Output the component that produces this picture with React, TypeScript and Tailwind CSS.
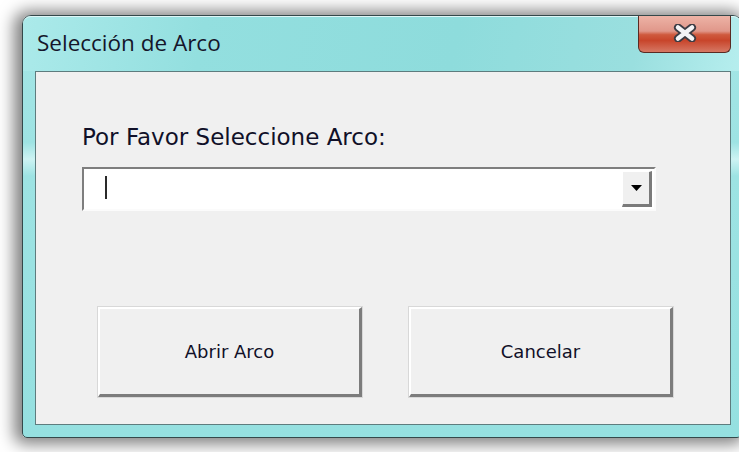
import React from 'react';

const CloseGlyph = () => (
  <svg width="24" height="18" viewBox="0 0 24 18">
    <g strokeLinecap="round">
      <path d="M5 3.5 L19 14.5 M19 3.5 L5 14.5" stroke="#3c3c44" strokeWidth="8" />
      <path d="M5 3.5 L19 14.5 M19 3.5 L5 14.5" stroke="#f4f4f6" strokeWidth="4.5" />
    </g>
  </svg>
);

const ArrowDown = () => (
  <svg width="11" height="6" viewBox="0 0 11 6">
    <path d="M0 0 H11 L5.5 6 Z" fill="#000" />
  </svg>
);

const DialogButton = ({ label }: { label: string }) => (
  <button className="w-[264px] h-[90px] bg-[#f0f0f0] border-t-2 border-l-2 border-t-white border-l-white border-b-[3px] border-r-[3px] border-b-[#7c7c7c] border-r-[#7c7c7c] outline outline-1 outline-[#d8d8d8] text-[18px] text-[#101028] font-['DejaVu_Sans',sans-serif]">
    {label}
  </button>
);

export default function App() {
  return (
    <div className="w-[739px] h-[452px] bg-white overflow-hidden pt-[15px] pl-[22px]">
      {/* window frame */}
      <div className="relative w-[720px] h-[423px] flex flex-col border border-[#34484a] rounded-t-[9px] rounded-b-[5px] bg-[linear-gradient(180deg,#a4e6e6_0%,#9ee3e3_30%,#cdf3f3_34%,#9de3e3_38%,#95e0e0_100%)] shadow-[-3px_1px_16px_5px_rgba(0,0,0,0.5)]">
        {/* title bar */}
        <div className="h-[55px] flex items-center pl-[14px] rounded-t-[8px] border-t border-t-[#dff7f7] bg-[linear-gradient(100deg,#abeaea_0%,#93dfdf_25%,#8edcdc_60%,#9adfdf_85%,#b6eeee_100%)]">
          <span className="text-[22.5px] text-[#15152a] font-['Open_Sans',sans-serif] leading-none -mt-[1px]">
            Selección de Arco
          </span>
        </div>

        <div className="absolute top-0 right-[10px] w-[93px] h-[37px] flex items-center justify-center rounded-b-[6px] border border-t-0 border-[#5a2a22] bg-[linear-gradient(180deg,#edb3a6_0%,#e0978a_42%,#cf5a3e_52%,#c8452b_68%,#d67864_100%)]">
          <div className="-mt-[2px]">
            <CloseGlyph />
          </div>
        </div>

        {/* client area */}
        <div className="flex-1 flex flex-col ml-[12px] mr-[10px] mb-[12px] w-[696px] border border-[#5e7c7e] bg-[#f0f0f0] pl-[46px] font-['DejaVu_Sans',sans-serif]">
          <div className="mt-[51px] h-[28px] flex items-center text-[23px] text-[#101028] leading-none">
            Por Favor Seleccione Arco:
          </div>

          <div className="mt-[16px] w-[574px] h-[44px] border-t-2 border-l-2 border-t-[#7e7e7e] border-l-[#7e7e7e] border-b-2 border-r-2 border-b-[#fbfbfb] border-r-[#fbfbfb] bg-white flex items-center p-[2px]">
            <div className="flex-1 h-full flex items-center pl-[19px]">
              <div className="w-[2px] h-[23px] bg-[#2a2a2a] -mt-[4px]" />
            </div>
            <div className="w-[30px] h-[36px] flex items-center justify-center bg-[#f0f0f0] border-t border-l border-t-white border-l-white border-b-[3px] border-r-[3px] border-b-[#7a7a7a] border-r-[#7a7a7a]">
              <ArrowDown />
            </div>
          </div>

          <div className="mt-[96px] ml-[16px] flex gap-[47px]">
            <DialogButton label="Abrir Arco" />
            <DialogButton label="Cancelar" />
          </div>
        </div>
      </div>
    </div>
  );
}
